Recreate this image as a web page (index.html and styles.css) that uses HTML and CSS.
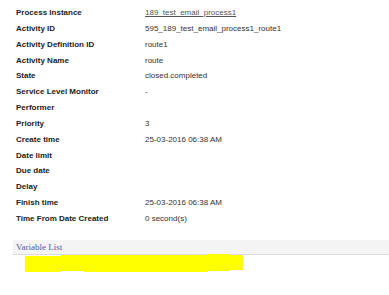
FILE: index.html
```html
<!DOCTYPE html>
<html>
<head>
<meta charset="utf-8">
<link rel="stylesheet" href="styles.css">
</head>
<body>
<div class="page">
  <table class="details">
    <tr><th>Process Instance</th><td><a class="link" href="#">189_test_email_process1</a></td></tr>
    <tr><th>Activity ID</th><td>595_189_test_email_process1_route1</td></tr>
    <tr><th>Activity Definition ID</th><td>route1</td></tr>
    <tr><th>Activity Name</th><td>route</td></tr>
    <tr><th>State</th><td>closed.completed</td></tr>
    <tr><th>Service Level Monitor</th><td>-</td></tr>
    <tr><th>Performer</th><td></td></tr>
    <tr><th>Priority</th><td>3</td></tr>
    <tr><th>Create time</th><td>25-03-2016 06:38 AM</td></tr>
    <tr><th>Date limit</th><td></td></tr>
    <tr><th>Due date</th><td></td></tr>
    <tr><th>Delay</th><td></td></tr>
    <tr><th>Finish time</th><td>25-03-2016 06:38 AM</td></tr>
    <tr><th>Time From Date Created</th><td>0 second(s)</td></tr>
  </table>
  <div class="section-head">Variable List</div>
  <div class="redact">
    <span class="seg s1"></span><span class="seg s2"></span><span class="seg s3"></span><span class="seg s4"></span><span class="seg s5"></span><span class="seg s6"></span><span class="seg s7"></span>
  </div>
</div>
</body>
</html>
```
FILE: styles.css
```css
html, body { margin: 0; padding: 0; background: #fff; }
.page { padding: 5px 0 0 13px; font-family: "Liberation Sans", Arial, sans-serif; font-size: 8px; color: #333; }
.details { border-collapse: collapse; margin-left: 3px; }
.details th, .details td { padding: 0; height: 15.85px; line-height: 15.85px; text-align: left; vertical-align: middle; white-space: nowrap; }
.details th { font-weight: bold; color: #222; width: 129px; }
.details td { color: #333; }
.link { color: #555; text-decoration: underline; }
.section-head { margin-top: 13px; background: #f4f4f4; border-bottom: 1px solid #dcdcdc; height: 14px; line-height: 14px; padding-left: 3px; font-family: "Liberation Serif", "Times New Roman", serif; font-size: 9px; color: #4a58b0; }
.redact { display: flex; align-items: flex-start; margin-left: 12px; }
.seg { display: block; background: #ffff00; }
.s1 { width: 36px; height: 16px; margin-top: 1px; }
.s2 { width: 23px; height: 16px; margin-top: 0; }
.s3 { width: 42px; height: 17px; margin-top: 0; }
.s4 { width: 57px; height: 17px; margin-top: 0; }
.s5 { width: 25px; height: 17px; margin-top: 0; }
.s6 { width: 22px; height: 17px; margin-top: -1px; }
.s7 { width: 13px; height: 15px; margin-top: 0; }
```
